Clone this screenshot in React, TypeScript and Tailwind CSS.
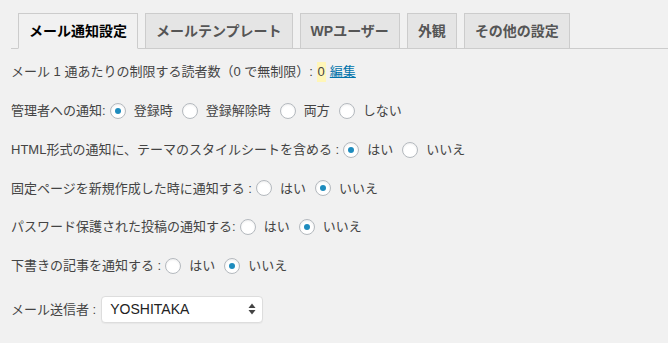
const tabs = [
  { label: 'メール通知設定', active: true },
  { label: 'メールテンプレート', active: false },
  { label: 'WPユーザー', active: false },
  { label: '外観', active: false },
  { label: 'その他の設定', active: false },
]

function Radio({ checked }: { checked?: boolean }) {
  return (
    <span className="w-4 h-4 shrink-0 rounded-full border border-[#b4b9be] bg-white shadow-[inset_0_1px_2px_rgba(0,0,0,0.07)] flex items-center justify-center">
      {checked && <span className="w-[6px] h-[6px] rounded-full bg-[#1e8cbe]" />}
    </span>
  )
}

function Options({ items, selected }: { items: string[]; selected: number }) {
  return (
    <div className="flex items-center ml-1">
      {items.map((item, i) => (
        <label key={item} className="flex items-center mr-[9px]">
          <Radio checked={i === selected} />
          <span className="ml-2">{item}</span>
        </label>
      ))}
    </div>
  )
}

function Row({ label, items, selected }: { label: string; items: string[]; selected: number }) {
  return (
    <div className="h-[38.8px] flex items-center">
      <span>{label}</span>
      <Options items={items} selected={selected} />
    </div>
  )
}

export default function App() {
  return (
    <div className="w-[668px] h-[343px] bg-[#f1f1f1] overflow-hidden font-['Liberation_Sans','Noto_Sans_CJK_JP',sans-serif] text-[13px] text-[#444]">
      <nav className="pt-[13px] ml-[11px] border-b border-[#ccc] flex">
        {tabs.map((tab) => (
          <a
            key={tab.label}
            className={
              tab.active
                ? 'ml-[7px] -mb-px px-[10px] py-[5px] leading-6 text-[14px] font-semibold border border-[#ccc] border-b-[#f1f1f1] bg-[#f1f1f1] text-black'
                : 'ml-[7px] -mb-px px-[10px] py-[5px] leading-6 text-[14px] font-semibold border border-[#ccc] bg-[#e5e5e5] text-[#555]'
            }
          >
            {tab.label}
          </a>
        ))}
      </nav>

      <div className="pl-[11px] pt-[3.6px]">
        <div className="h-[38.8px] flex items-center">
          <span>メール 1 通あたりの制限する読者数（0 で無制限）:&nbsp;</span>
          <span className="bg-[#fff6b8] px-[1px]">0</span>
          <a className="ml-1 text-[#0073aa] underline">編集</a>
        </div>
        <Row label="管理者への通知:" items={['登録時', '登録解除時', '両方', 'しない']} selected={0} />
        <Row label="HTML形式の通知に、テーマのスタイルシートを含める :" items={['はい', 'いいえ']} selected={0} />
        <Row label="固定ページを新規作成した時に通知する :" items={['はい', 'いいえ']} selected={1} />
        <Row label="パスワード保護された投稿の通知する:" items={['はい', 'いいえ']} selected={1} />
        <Row label="下書きの記事を通知する :" items={['はい', 'いいえ']} selected={1} />

        <div className="mt-[10.6px] flex items-center">
          <span>メール送信者 :</span>
          <div className="ml-[5px] w-[162px] h-[27px] bg-white border border-[#ddd] rounded-[4px] shadow-[0_1px_1px_rgba(0,0,0,0.04)] flex items-center justify-between pl-[8px] pr-[6px]">
            <span className="text-[14px] text-[#222]">YOSHITAKA</span>
            <svg width="8" height="12" viewBox="0 0 8 12" className="text-[#444]">
              <path d="M4 0.5 L7.5 5 H0.5 Z" fill="currentColor" />
              <path d="M4 11.5 L7.5 7 H0.5 Z" fill="currentColor" />
            </svg>
          </div>
        </div>
      </div>
    </div>
  )
}
